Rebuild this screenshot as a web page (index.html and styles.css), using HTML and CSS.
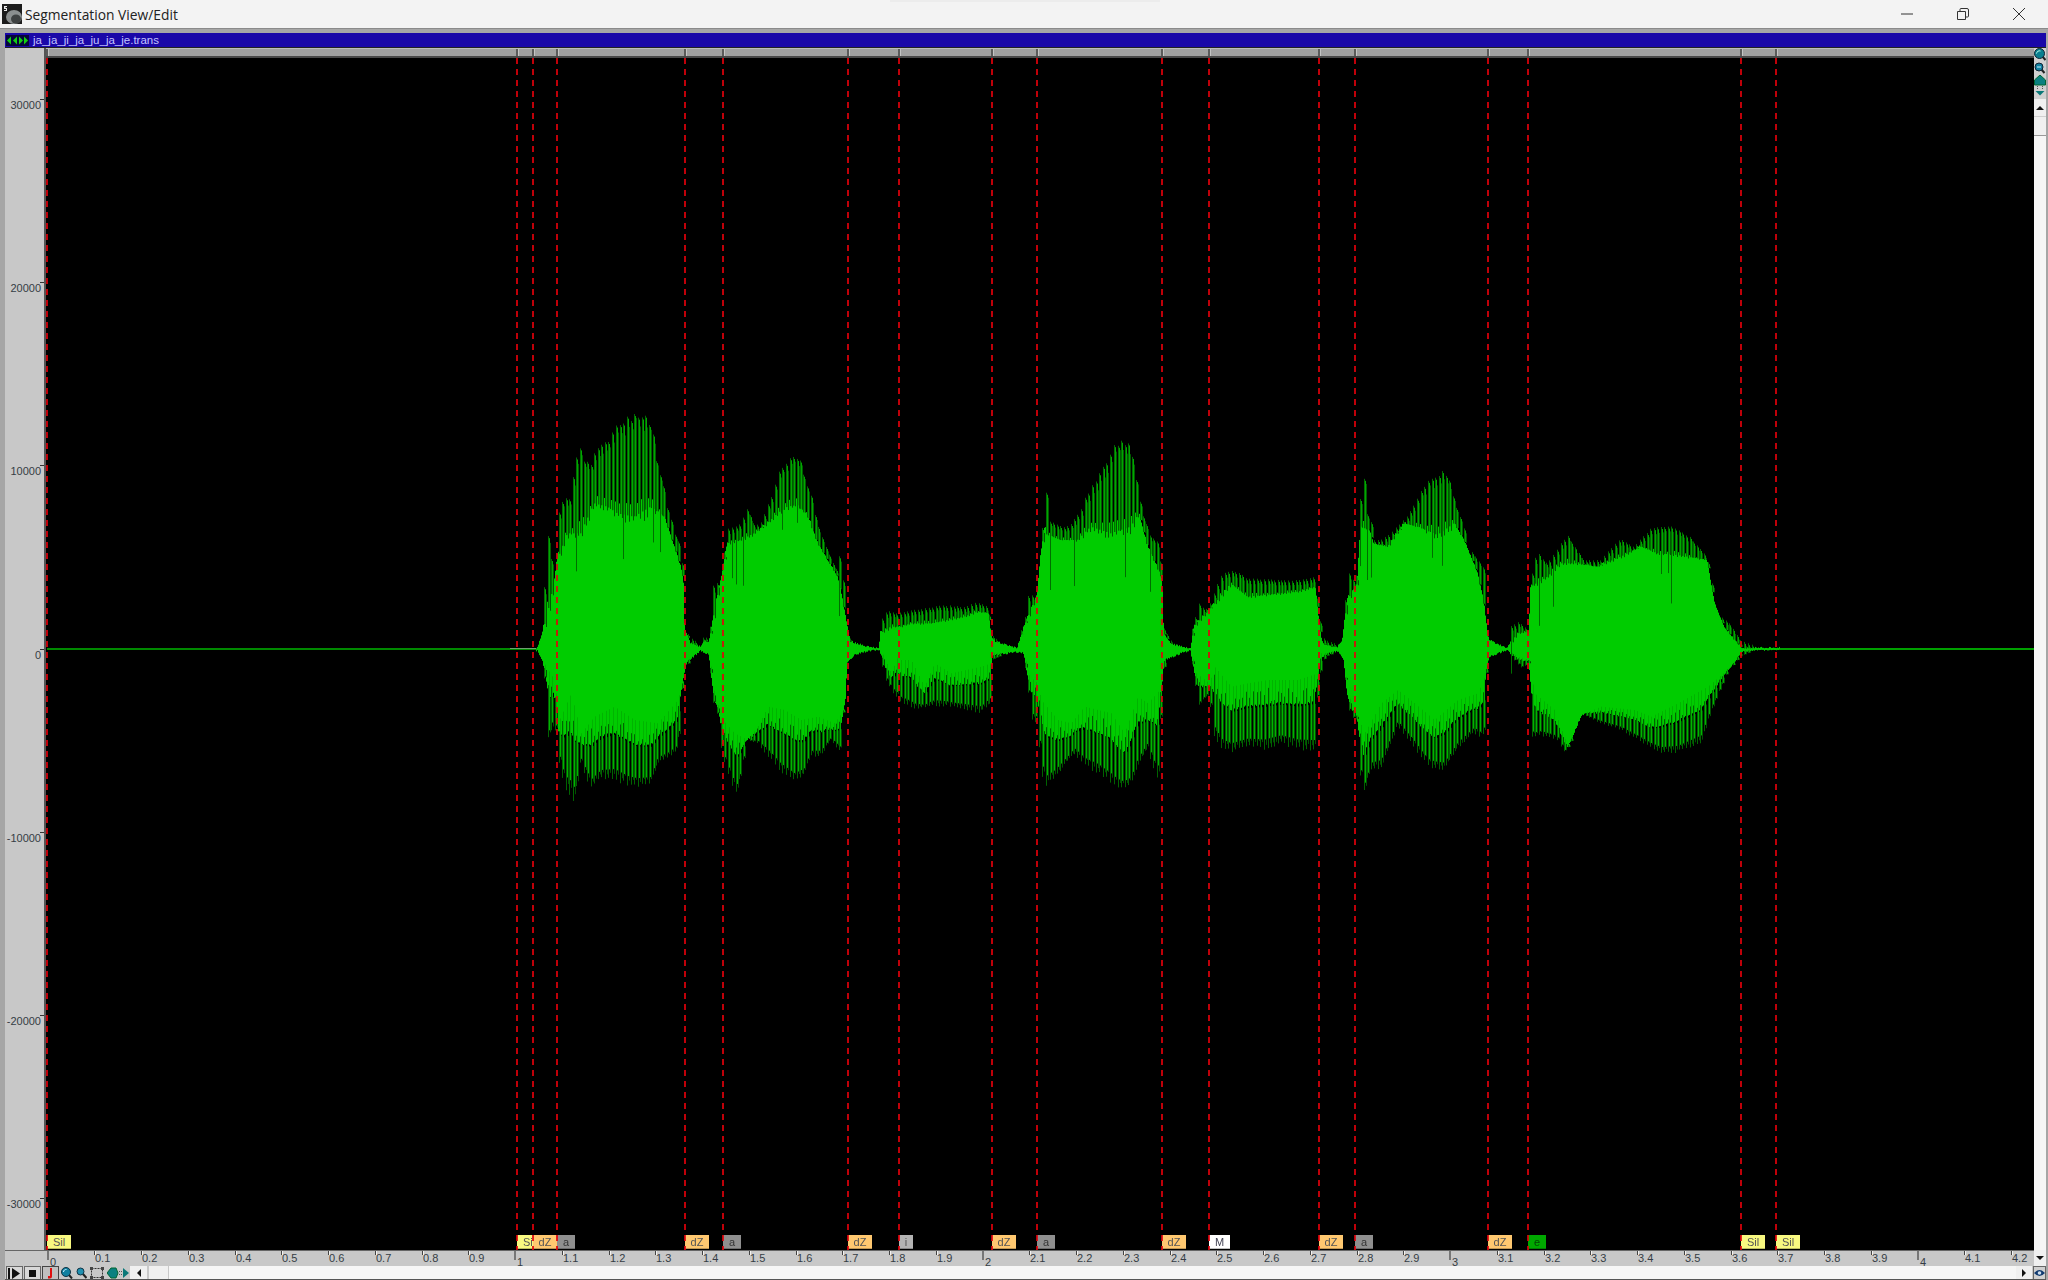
FILE: index.html
```html
<!DOCTYPE html>
<html lang="en">

<head>
    <meta charset="UTF-8">
    <title>Segmentation View/Edit</title>
    <link rel="stylesheet" href="styles.css">
</head>

<body>
    <div class="titlebar">
        <svg class="app-icon" width="20" height="20" viewBox="0 0 20 20">
            <rect width="20" height="20" fill="#1c1c1c"/>
            <ellipse cx="12" cy="13" rx="8" ry="7" fill="#8b8f8f"/>
            <ellipse cx="14" cy="15" rx="5" ry="4.500" fill="#3f4242"/>
            <path d="M2 2h3v1H3.500v1H5v3H2V6h2V5H2z" fill="#e8e8e8"/>
        </svg>
        <span class="app-title">Segmentation View/Edit</span>
        <div class="win-buttons">
            <svg class="win-btn" width="14" height="14" viewBox="0 0 14 14">
                <path d="M1 7h12" stroke="#333" fill="none"/>
            </svg>
            <svg class="win-btn" width="14" height="14" viewBox="0 0 14 14">
                <path d="M1.500 4.500h8v8h-8zM4 4.500V2.500a1 1 0 0 1 1-1h6a1.500 1.500 0 0 1 1.500 1.500v6a1 1 0 0 1-1 1h-2" stroke="#333" fill="none"/>
            </svg>
            <svg class="win-btn" width="14" height="14" viewBox="0 0 14 14">
                <path d="M1 1l12 12M13 1L1 13" stroke="#333" fill="none"/>
            </svg>
        </div>
    </div>
    <div class="shadow-strip"></div>

    <div class="window">
        <div class="doc-bar">
            <svg class="doc-icon" width="23" height="11" viewBox="0 0 23 11">
                <rect width="23" height="11" fill="#06063a"/>
                <path d="M1 5.500l4-4v8zM7 5.500l4-4v8zM13 1.500l4 4-4 4zM18 1.500l4 4-4 4z" fill="#12d012"/>
            </svg>
            <span class="doc-name">ja_ja_ji_ja_ju_ja_je.trans</span>
        </div>

        <div class="workspace">
            <div class="left-col">
                <div class="view">
                    <div class="y-axis"></div>
                    <div class="view-main">
                        <div class="seg-ruler"></div>
                        <div class="plot">
                            <canvas class="wave" width="1988" height="1192"></canvas>
                        </div>
                    </div>
                </div>
                <div class="time-axis"></div>
            </div>

            <div class="side">
                <svg class="side-icon" width="12" height="13" viewBox="0 0 12 13">
                    <path d="M8 8l3.500 4" stroke="#222" stroke-width="2"/>
                    <circle cx="5.500" cy="5.500" r="5" fill="#0a7f8f" stroke="#123"/>
                    <path d="M2.500 5.500a3 3 0 0 1 4-2.500" stroke="#bfe" fill="none"/>
                </svg>
                <svg class="side-icon" width="12" height="12" viewBox="0 0 12 12">
                    <path d="M7 7l3.500 4" stroke="#222" stroke-width="2"/>
                    <circle cx="5" cy="5" r="4" fill="#1080a0" stroke="#123"/>
                    <path d="M3 5h4" stroke="#cef"/>
                </svg>
                <svg class="side-icon" width="12" height="21" viewBox="0 0 12 21">
                    <path d="M6 0l5.500 5v5h-11V5z" fill="#0a8080" stroke="#063"/>
                    <path d="M3.500 11v4M8.500 11v4" stroke="#555" stroke-dasharray="1 1"/>
                    <path d="M1.500 16h9L6 20.500z" fill="#0a7878"/>
                </svg>
                <div class="scroll-btn up-btn"><span class="tri-up"></span></div>
                <div class="v-thumb"></div>
                <div class="v-track"></div>
                <div class="scroll-btn down-btn"><span class="tri-down"></span></div>
            </div>
        </div>

        <div class="toolbar">
            <div class="tool-btn">
                <svg width="13" height="11" viewBox="0 0 13 11"><path d="M0 0h2v11H0zM4 0l8 5.500L4 11z" fill="#111"/></svg>
            </div>
            <div class="tool-btn">
                <svg width="7" height="7" viewBox="0 0 7 7"><rect width="7" height="7" fill="#111"/></svg>
            </div>
            <div class="tool-btn sunken">
                <svg width="7" height="11" viewBox="0 0 7 11"><path d="M5 0v8.500a2 2 0 0 1-2 2H1V8h2V0z" fill="#e01010"/></svg>
            </div>
            <div class="tool-icons">
                <svg width="12" height="12" viewBox="0 0 12 12">
                    <path d="M8 8l3 3.500" stroke="#222" stroke-width="2"/>
                    <circle cx="5" cy="5" r="4.500" fill="#1080a0" stroke="#134"/>
                    <path d="M2.500 5a2.500 2.500 0 0 1 3-2.500" stroke="#cef" fill="none"/>
                </svg>
                <svg width="11" height="12" viewBox="0 0 11 12">
                    <path d="M7 7l3.500 4" stroke="#222" stroke-width="2"/>
                    <circle cx="4.500" cy="4.500" r="3.500" fill="#2090b0" stroke="#134"/>
                </svg>
                <svg width="14" height="12" viewBox="0 0 14 12">
                    <path d="M1.500 1.500h11v9h-11z" fill="none" stroke="#333" stroke-dasharray="2 1"/>
                    <path d="M0 0h3v3H0zM11 0h3v3h-3zM0 9h3v3H0zM11 9h3v3h-3z" fill="#444"/>
                </svg>
                <svg width="22" height="12" viewBox="0 0 22 12">
                    <path d="M0 6l4-5h5l2 5-2 5H4z" fill="#0a8080" stroke="#063"/>
                    <path d="M12 4.500h3M12 7.500h3" stroke="#555" stroke-dasharray="1 1"/>
                    <path d="M16 1l6 5-6 5z" fill="#0a7878"/>
                </svg>
            </div>
            <div class="scroll-btn left-btn"><span class="tri-left"></span></div>
            <div class="h-thumb"></div>
            <div class="h-track"></div>
            <div class="scroll-btn right-btn"><span class="tri-right"></span></div>
            <div class="tool-btn eye-btn">
                <svg width="11" height="8" viewBox="0 0 11 8">
                    <path d="M0 4q5.500-6 11 0q-5.500 6-11 0z" fill="#103a70"/>
                    <circle cx="5.500" cy="4" r="1.800" fill="#cde"/>
                </svg>
            </div>
        </div>
    </div>

    <script src="waveform.js"></script>
</body>

</html>
```

FILE: styles.css
```css
*{
    margin: 0;padding: 0;
    box-sizing: border-box;
}
body {
    width: 2048px;
    height: 1280px;
    display: flex;
    flex-direction: column;
    overflow: hidden;
    position: relative;
    background: #a6a6a6;
    font-family: "Liberation Sans", Arial, sans-serif;
}
.titlebar{
    height: 28px;
    flex: none;
    display: flex;
    align-items: center;
    background: #f3f3f3;
    padding-left: 2px;
}
.app-icon{
    flex: none;
}
.app-title{
    margin-left: 3px;
    font-family: "Open Sans", sans-serif;
    font-size: 13.800px;
    color: #222;
}
.win-buttons{
    margin-left: auto;
    display: flex;
    gap: 42px;
    padding-right: 22px;
}
.shadow-strip{
    position: absolute;
    left: 890px;
    top: 0;
    width: 270px;
    height: 2px;
    background: #ececec;
}
.window{
    flex: 1;
    display: flex;
    flex-direction: column;
    padding: 4px 2px 0 5px;
    min-height: 0;
    border-top: 1px solid #8a8a8a;
}
.doc-bar{
    height: 15px;
    flex: none;
    display: flex;
    align-items: center;
    padding-left: 1px;
    background: #1a08a8;
    border-bottom: 1px solid #222;
}
.doc-icon{
    flex: none;
}
.doc-name{
    margin-left: 4px;
    font-size: 11.500px;
    color: #c4c4ff;
}
.workspace{
    flex: 1;
    display: flex;
    min-height: 0;
}
.left-col{
    width: 2029px;
    flex: none;
    display: flex;
    flex-direction: column;
}
.view{
    flex: 1;
    display: flex;
    min-height: 0;
}
.y-axis{
    width: 41px;
    flex: none;
    position: relative;
    background: #c8c8c8;
    border-right: 2px solid #555;
}
.y-label{
    position: absolute;
    right: 3px;
    font-size: 11px;
    line-height: 12px;
    color: #353d45;
}
.y-tick{
    position: absolute;
    right: 0;
    width: 4px;
    height: 1px;
    background: #333;
}
.view-main{
    flex: 1;
    display: flex;
    flex-direction: column;
    min-width: 0;
}
.seg-ruler{
    height: 10px;
    flex: none;
    position: relative;
    background: #a0a0a0;
    border-top: 1px solid #bdbdbd;
    border-bottom: 2px solid #484848;
}
.grip{
    position: absolute;
    top: 0;
    bottom: 0;
    width: 2px;
    background: #5a5a5a;
    box-shadow: 1px 0 0 #c4c4c4;
}
.plot{
    flex: 1;
    position: relative;
    background: #000;
    overflow: hidden;
}
.wave{
    display: block;
}
.marker{
    position: absolute;
    top: 0;
    bottom: 0;
    width: 2px;
    z-index: 2;
    background: repeating-linear-gradient(rgba(225, 0, 10, .85) 0 6px, transparent 6px 11px);
}
.seg{
    position: absolute;
    top: 1177px;
    height: 14px;
    font-size: 11px;
    line-height: 14px;
    text-align: center;
    color: #555;
    border-bottom: 1px solid rgba(0, 0, 0, .25);
    overflow: hidden;
}
.seg-sil{
    width: 24px;
    background: #f8f880;
}
.seg-dz{
    width: 24px;
    background: #ffc870;
}
.seg-a{
    width: 18px;
    background: #8f8f8f;
    color: #333;
}
.seg-i{
    width: 14px;
    background: #b4b4b4;
}
.seg-m{
    width: 21px;
    background: #fff;
    color: #445;
}
.seg-e{
    width: 18px;
    background: #00a800;
    color: #024402;
}
.time-axis{
    height: 16px;
    flex: none;
    position: relative;
    background: #c8c8c8;
    border-top: 1px solid #666;
}
.t-tick{
    position: absolute;
    top: 0;
    width: 1px;
    height: 4px;
    background: #444;
    box-shadow: 1px 0 0 #f2f2f2;
}
.t-tick.major{
    width: 2px;
    height: 9px;
    background: #777;
    box-shadow: none;
}
.t-label{
    position: absolute;
    top: 1px;
    font-size: 11px;
    line-height: 12px;
    color: #353d45;
}
.t-label.major{
    top: 5px;
}
.side{
    width: 12px;
    flex: none;
    display: flex;
    flex-direction: column;
    background: #d0d0d0;
}
.side-icon{
    display: block;
    flex: none;
}
.side-icon + .side-icon{
    margin-top: 1px;
}
.scroll-btn{
    flex: none;
    display: flex;
    align-items: center;
    justify-content: center;
    background: #f0f0f0;
}
.up-btn{
    height: 17px;
    margin-top: 3px;
}
.v-thumb{
    height: 19px;
    flex: none;
    margin-top: 1px;
    background: #f0f0f0;
    border-bottom: 1px solid #999;
}
.v-track{
    flex: 1;
    background: #f6f6f6;
}
.down-btn{
    height: 16px;
}
.tri-up,.tri-down,.tri-left,.tri-right{
    width: 0;
    height: 0;
    border-style: solid;
    border-color: transparent;
}
.tri-up{
    border-width: 0 4px 4px;
    border-bottom-color: #111;
}
.tri-down{
    border-width: 4px 4px 0;
    border-top-color: #111;
}
.tri-left{
    border-width: 4px 4px 4px 0;
    border-right-color: #111;
}
.tri-right{
    border-width: 4px 0 4px 4px;
    border-left-color: #111;
}
.toolbar{
    height: 14px;
    flex: none;
    display: flex;
    align-items: stretch;
    background: #c8c8c8;
    border-bottom: 1px solid #555;
}
.tool-btn{
    width: 17px;
    flex: none;
    display: flex;
    align-items: center;
    justify-content: center;
    margin-left: 1px;
    background: #d8d8d8;
    border: 1px solid #666;
    border-bottom: 0;
}
.tool-btn.sunken{
    margin-left: 1px;
    background: #c0c0c0;
    border-color: #444;
}
.tool-icons{
    width: 71px;
    flex: none;
    display: flex;
    align-items: center;
    gap: 3px;
    padding-left: 2px;
}
.left-btn{
    width: 17px;
}
.h-thumb{
    width: 19px;
    flex: none;
    margin-left: 2px;
    background: #f0f0f0;
}
.h-track{
    flex: 1;
    margin-left: 1px;
    background: #f6f6f6;
}
.right-btn{
    width: 16px;
}
.eye-btn{
    width: 13px;
    margin-left: 1px;
    background: #d0d0d0;
}
```

FILE: waveform.js
```js
// plot origin in page pixels
var PLOT_X = 46;
var PLOT_Y = 58;

// envelopes were read off three crops at 3x, so points are stored in crop units
function crop(ox, oy, list, from, to) {
    return list.map(function (p) {
        return [ox + p[0] / 3, oy + p[1] / 3];
    }).filter(function (p) {
        return p[0] >= from && p[0] < to;
    });
}
function envelope(a, b, c) {
    return crop(500, 400, a, 0, 880).concat(crop(880, 420, b, 880, 1325), crop(1300, 440, c, 1325, 3000));
}

var outerTop = envelope(
    [[110,745],[125,690],[140,400],[150,395],[160,650],[170,370],[185,295],[210,290],[236,110],[250,165],[270,200],[285,140],[305,120],[330,110],[350,65],[370,48],[400,40],[420,35],[440,50],[460,100],[470,190],[490,260],[500,320],[515,365],[525,400],[540,440],[550,520],[555,690],[570,710],[600,735],[612,705],[625,720],[630,680],[635,650],[640,530],[655,555],[665,520],[680,385],[700,380],[720,370],[740,320],[760,370],[780,375],[800,320],[820,270],[840,205],[860,180],[880,160],[900,180],[915,240],[935,290],[950,370],[970,420],[990,470],[1010,510],[1020,450],[1030,550],[1038,680],[1050,715],[1100,735],[1135,745]],
    [[0,605],[20,570],[50,580],[90,570],[150,560],[200,555],[250,560],[290,545],[325,560],[332,640],[345,655],[380,670],[410,680],[420,640],[435,590],[445,520],[470,530],[480,460],[487,300],[495,175],[505,300],[525,310],[545,320],[570,315],[600,270],[620,220],[650,170],[680,110],[700,75],[720,60],[745,65],[760,120],[775,220],[790,290],[810,345],[835,365],[845,480],[850,620],[870,660],[900,675],[930,685],[935,630],[945,590],[955,545],[975,570],[990,550],[1005,510],[1020,465],[1050,450],[1080,460],[1100,475],[1150,475],[1200,480],[1250,480],[1305,470],[1315,580],[1330,650]],
    [[75,600],[110,612],[125,610],[135,480],[145,395],[160,420],[170,400],[180,170],[190,90],[200,220],[210,220],[220,300],[240,300],[270,280],[320,230],[340,190],[370,140],[400,100],[435,90],[450,125],[470,210],[490,250],[500,320],[520,340],[550,380],[555,560],[565,595],[590,610],[620,625],[630,560],[655,545],[685,570],[690,430],[710,325],[740,370],[770,330],[800,280],[820,310],[850,360],[900,360],[960,295],[1000,320],[1050,265],[1110,255],[1170,290],[1220,350],[1230,390],[1250,520],[1290,550],[1320,600],[1360,615],[1440,622]]
);
var innerTop = envelope(
    [[110,745],[125,700],[150,600],[170,480],[200,400],[240,400],[280,310],[320,320],[350,340],[400,350],[450,320],[490,350],[510,410],[530,470],[545,520],[550,560],[552,680],[570,730],[600,740],[612,720],[625,730],[640,640],[668,500],[680,430],[720,420],[760,400],[800,370],[830,340],[860,320],[890,315],[920,350],[950,430],[980,480],[1010,530],[1035,650],[1050,725],[1100,740],[1135,745]],
    [[0,640],[30,620],[60,620],[90,610],[150,610],[200,600],[250,590],[290,575],[325,580],[332,650],[345,665],[380,675],[410,685],[430,620],[470,520],[480,400],[490,340],[540,360],[590,360],[630,320],[690,340],[750,320],[775,280],[800,380],[845,480],[850,640],[870,670],[900,680],[930,687],[940,620],[985,570],[1020,530],[1050,490],[1100,530],[1150,525],[1200,520],[1250,515],[1305,500],[1315,600],[1325,670]],
    [[75,615],[110,622],[125,600],[140,480],[170,430],[180,260],[205,270],[220,310],[260,320],[310,250],[350,260],[410,285],[460,250],[500,320],[530,400],[555,520],[565,600],[620,625],[650,580],[685,575],[690,440],[740,410],[780,370],[830,370],[890,380],[960,350],[1020,320],[1070,340],[1130,345],[1220,360],[1240,480],[1270,560],[1300,600],[1325,625],[1440,624]]
);
var innerBot = envelope(
    [[110,750],[135,800],[160,840],[175,960],[210,880],[240,1000],[280,950],[340,920],[400,960],[470,970],[530,900],[550,830],[560,780],[600,755],[625,760],[640,880],[665,960],[700,1000],[740,1020],[770,980],[800,920],[850,930],[900,960],[950,950],[1000,970],[1035,920],[1040,790],[1060,765],[1100,752],[1135,747]],
    [[0,690],[30,760],[50,710],[60,720],[90,720],[130,800],[160,730],[210,760],[300,740],[330,730],[335,700],[430,700],[445,770],[470,790],[480,840],[530,900],[570,910],[610,860],[690,880],[730,940],[770,830],[800,850],[845,800],[850,720],[930,690],[945,760],[985,790],[1000,740],[1050,800],[1100,790],[1160,780],[1250,780],[1310,760],[1320,700]],
    [[75,640],[110,630],[130,660],[140,760],[170,830],[190,880],[240,790],[290,750],[340,790],[400,840],[470,780],[530,760],[555,700],[565,650],[620,630],[650,650],[685,660],[700,760],[760,810],[800,920],[850,820],[900,800],[1000,810],[1050,830],[1130,790],[1220,740],[1290,680],[1325,630],[1440,626]]
);
var outerBot = envelope(
    [[110,750],[125,780],[135,860],[145,1040],[160,950],[175,1080],[190,1160],[220,1205],[240,1090],[270,1170],[300,1140],[340,1140],[380,1160],[410,1165],[450,1160],[470,1090],[500,1080],[530,1060],[550,820],[565,790],[600,750],[625,770],[640,920],[655,950],[665,1070],[700,1170],[710,1180],[740,1020],[770,1030],[800,1070],[840,1120],[880,1150],[910,1130],[930,1070],[960,1070],[990,1020],[1020,1060],[1040,790],[1060,770],[1100,755],[1135,747]],
    [[0,720],[20,790],[45,830],[60,850],[100,870],[150,860],[200,860],[250,870],[300,880],[330,850],[335,720],[380,700],[410,690],[430,700],[440,790],[455,900],[470,910],[480,1020],[490,1110],[520,1080],[550,1040],[580,1000],[610,1040],[650,1060],[700,1100],[720,1110],[750,1105],[770,1050],[800,990],[830,1095],[845,800],[855,720],[900,700],[930,690],[945,800],[955,860],[985,820],[1000,950],[1020,990],[1050,1000],[1100,985],[1150,990],[1200,975],[1250,990],[1300,995],[1315,780],[1325,740]],
    [[75,650],[120,635],[130,670],[140,770],[150,830],[170,840],[175,950],[185,1080],[210,990],[240,990],[290,860],[330,910],[380,980],[430,995],[470,930],[520,880],[548,910],[558,700],[570,650],[620,630],[640,660],[665,685],[685,670],[695,900],[720,890],[770,900],[795,940],[815,900],[840,820],[900,850],[960,870],[1010,900],[1080,940],[1130,940],[1200,910],[1230,820],[1280,700],[1320,650],[1360,632],[1440,628]]
);

function at(list, x) {
    for (var i = 1; i < list.length; i++) {
        if (x <= list[i][0]) {
            var a = list[i - 1], b = list[i];
            return a[1] + (b[1] - a[1]) * (x - a[0]) / (b[0] - a[0]);
        }
    }
    return list[list.length - 1][1];
}

var seed = 7;
function rnd() {
    seed = (seed * 16807) % 2147483647;
    return seed / 2147483647;
}

function drawWave() {
    var ctx = document.querySelector(".wave").getContext("2d");
    ctx.translate(-PLOT_X, -PLOT_Y);

    // flat line either side of the speech
    ctx.fillStyle = "#008a00";
    ctx.fillRect(47, 648, 2034 - 47, 2);
    ctx.fillStyle = "#00a000";
    ctx.fillRect(1745, 648, 2034 - 1745, 2);
    ctx.fillStyle = "#6f9f6f";
    ctx.fillRect(510, 648, 26, 1);

    var start = innerTop[0][0], end = innerTop[innerTop.length - 1][0];
    var x;
    for (x = Math.floor(start); x < end; x++) {
        var ot = at(outerTop, x), it = at(innerTop, x);
        var ob = at(outerBot, x), ib = at(innerBot, x);
        // the bright body runs a bit past the slit line underneath
        var t = it - (it - ot) * 0.12 + rnd() * 2 - 1;
        var b = ib + (ob - ib) * 0.35 + rnd() * 2 - 1;
        ctx.fillStyle = "#00cc00";
        ctx.fillRect(x, t, 1, Math.max(b - t, 2));
    }

    // one dark stroke per glottal pulse, reaching out from the solid body
    for (var s = start; s < end; s += 3.3 + rnd() * 0.6) {
        x = Math.round(s);
        spikeUp(ctx, x, at(outerTop, x), at(innerTop, x));
        spikeDown(ctx, x, at(outerBot, x), at(innerBot, x));
    }
}

function spikeUp(ctx, x, outer, inner) {
    var gap = inner - outer;
    if (gap < 3) {
        return;
    }
    var tip = outer + rnd() * gap * 0.08;
    var slit = (gap > 14 && rnd() < 0.14) ? 15 + rnd() * 40 : 0;
    ctx.fillStyle = "#006e00";
    ctx.fillRect(x, tip, 1, inner - tip + slit);
    ctx.fillStyle = "#00a800";
    ctx.fillRect(x + 1, tip + 2, 1, inner - tip - 2);
    ctx.fillStyle = "#005a00";
    ctx.fillRect(x + 2, tip + 4 + rnd() * gap * 0.1, 1, Math.max(inner - tip - 4, 0));
}

function spikeDown(ctx, x, outer, inner) {
    var gap = outer - inner;
    if (gap < 3) {
        return;
    }
    var tip = outer - rnd() * gap * 0.06;
    // dark stroke starts inside the body edge and runs out to the tip
    var from = inner + gap * (0.1 + rnd() * 0.22);
    ctx.fillStyle = "#006400";
    ctx.fillRect(x, from, 1, tip - from);
    // a thin bright stroke next to it, the third column stays dark
    ctx.fillStyle = "#00b400";
    ctx.fillRect(x + 1, inner, 1, gap * 0.85);
    ctx.fillStyle = "#005000";
    ctx.fillRect(x + 2, inner + gap * 0.38, 1, Math.max(tip - inner - gap * 0.45, 0));
}

function addEl(parent, cls, text, left, top) {
    var el = document.createElement("div");
    el.className = cls;
    if (text) {
        el.textContent = text;
    }
    if (left !== null) {
        el.style.left = left + "px";
    }
    if (top !== null) {
        el.style.top = top + "px";
    }
    parent.appendChild(el);
    return el;
}

function drawAxes() {
    var yAxis = document.querySelector(".y-axis");
    for (var v = 3; v >= -3; v--) {
        var tickY = Math.round(648.5 - v * 183.3) - 48;
        addEl(yAxis, "y-tick", "", null, tickY);
        addEl(yAxis, "y-label", String(v * 10000), null, tickY);
    }
    var tAxis = document.querySelector(".time-axis");
    for (var i = 0; i <= 42; i++) {
        var x = Math.round(47.5 + i * 46.75) - 5;
        var major = i % 10 === 0;
        var name = major ? String(i / 10) : (i / 10).toFixed(1);
        addEl(tAxis, major ? "t-tick major" : "t-tick", "", x - (major ? 1 : 0), null);
        addEl(tAxis, major ? "t-label major" : "t-label", name, x + (major ? 2 : 1), null);
    }
}

function drawSegments() {
    var plot = document.querySelector(".plot");
    var ruler = document.querySelector(".seg-ruler");
    var segs = [
        [47, "Sil", "seg-sil"], [517, "Sil", "seg-sil"], [533, "dZ", "seg-dz"], [557, "a", "seg-a"],
        [685, "dZ", "seg-dz"], [723, "a", "seg-a"], [848, "dZ", "seg-dz"], [899, "i", "seg-i"],
        [992, "dZ", "seg-dz"], [1037, "a", "seg-a"], [1162, "dZ", "seg-dz"], [1209, "M", "seg-m"],
        [1319, "dZ", "seg-dz"], [1355, "a", "seg-a"], [1488, "dZ", "seg-dz"], [1528, "e", "seg-e"],
        [1741, "Sil", "seg-sil"], [1776, "Sil", "seg-sil"]
    ];
    segs.forEach(function (s) {
        addEl(plot, "seg " + s[2], s[1], s[0] - PLOT_X, null);
        addEl(plot, "marker", "", s[0] - PLOT_X - 1, null);
        addEl(ruler, "grip", "", s[0] - PLOT_X - 1, null);
    });
}

drawWave();
drawAxes();
drawSegments();
```
